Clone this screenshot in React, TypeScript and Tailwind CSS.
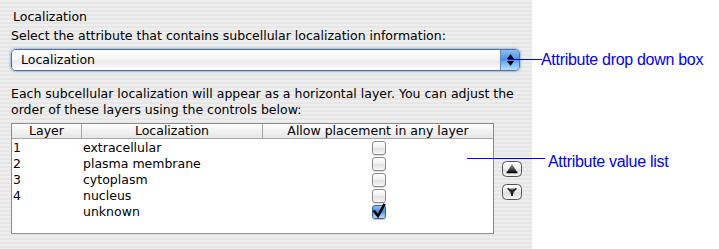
import React from "react";

const rows = [
  { layer: "1", name: "extracellular", checked: false },
  { layer: "2", name: "plasma membrane", checked: false },
  { layer: "3", name: "cytoplasm", checked: false },
  { layer: "4", name: "nucleus", checked: false },
  { layer: "", name: "unknown", checked: true },
];

function Checkbox({ checked }: { checked: boolean }) {
  if (checked) {
    return (
      <div className="relative w-[14px] h-[14px] rounded-[3px] border border-[#3b5f9a] bg-[linear-gradient(#8fc2f7,#3f86e0_50%,#5ea3f3_55%,#b7e0ff)] shadow-[0_1px_1px_rgba(0,0,0,0.25)]">
        <svg width="14" height="15" viewBox="0 0 14 15" className="absolute left-[-1px] top-[-3px]">
          <path d="M2.5 8.5 L6 13 L12 2" fill="none" stroke="#000" strokeWidth="2.6" strokeLinecap="square" strokeLinejoin="miter" />
        </svg>
      </div>
    );
  }
  return (
    <div className="w-[14px] h-[14px] rounded-[3px] border border-[#8a8a8a] bg-[linear-gradient(#ffffff,#eeeeee_50%,#e2e2e2_55%,#f7f7f7)] shadow-[0_1px_1px_rgba(0,0,0,0.15)]" />
  );
}

function UpButton() {
  return (
    <svg width="20" height="16" viewBox="0 0 20 16">
      <defs>
        <linearGradient id="btnbg" x1="0" y1="0" x2="0" y2="1">
          <stop offset="0" stopColor="#ffffff" />
          <stop offset="0.5" stopColor="#eeeeee" />
          <stop offset="0.55" stopColor="#dedede" />
          <stop offset="1" stopColor="#f4f4f4" />
        </linearGradient>
        <linearGradient id="triup" x1="0" y1="0" x2="0" y2="1">
          <stop offset="0" stopColor="#9a9a9a" />
          <stop offset="1" stopColor="#1a1a1a" />
        </linearGradient>
      </defs>
      <rect x="0.5" y="0.5" width="19" height="15" rx="4" fill="url(#btnbg)" stroke="#555" />
      <path d="M10 3 L15 11 L5 11 Z" fill="url(#triup)" />
      <path d="M4.5 11.5 L15.5 11.5" stroke="#000" strokeWidth="1.5" />
    </svg>
  );
}

function DownButton() {
  return (
    <svg width="20" height="16" viewBox="0 0 20 16">
      <defs>
        <linearGradient id="btnbg2" x1="0" y1="0" x2="0" y2="1">
          <stop offset="0" stopColor="#ffffff" />
          <stop offset="0.5" stopColor="#eeeeee" />
          <stop offset="0.55" stopColor="#dedede" />
          <stop offset="1" stopColor="#f4f4f4" />
        </linearGradient>
      </defs>
      <rect x="0.5" y="0.5" width="19" height="15" rx="4" fill="url(#btnbg2)" stroke="#555" />
      <path d="M5.5 4.5 L14.5 4.5 L10 12 Z" fill="#6a6a6a" />
      <path d="M5.5 4.5 L10 7.5 L14.5 4.5" fill="none" stroke="#111" strokeWidth="1.4" />
      <path d="M10 7.5 L10 12" stroke="#111" strokeWidth="1.6" />
    </svg>
  );
}

export default function App() {
  return (
    <div
      className="relative w-[719px] h-[249px] flex bg-white overflow-hidden text-[12.5px] text-black"
      style={{ fontFamily: '"DejaVu Sans", Verdana, sans-serif' }}
    >
      <div className="w-[532px] h-full shrink-0 bg-[repeating-linear-gradient(to_bottom,#eeeeee_0px,#eeeeee_2px,#e6e6e6_2px,#e6e6e6_4px)] pl-[11px] pt-[9px] flex flex-col">
        <div className="h-4 leading-4 ml-[2px]">Localization</div>
        <div className="mt-[3px] h-4 leading-4">Select the attribute that contains subcellular localization information:</div>

        <div className="mt-[5px] w-[509px] h-[22px] flex rounded-[5px] border border-[#54709a] shadow-[0_0_2px_1px_rgba(90,140,210,0.55)] overflow-hidden">
          <div className="flex-1 flex items-center pl-[9px] bg-[linear-gradient(#ffffff,#f5f5f5_50%,#e8e8e8_55%,#ffffff)]">
            Localization
          </div>
          <div className="w-[19px] flex flex-col items-center justify-center gap-[2px] border-l border-[#6a8cc0] bg-[linear-gradient(#8cbdf5,#4a8ee5_50%,#63a6f4_55%,#b6e2ff)]">
            <svg width="7" height="5" viewBox="0 0 7 5"><path d="M3.5 0 L7 5 L0 5 Z" fill="#000" /></svg>
            <svg width="7" height="5" viewBox="0 0 7 5"><path d="M0 0 L7 0 L3.5 5 Z" fill="#000" /></svg>
          </div>
        </div>

        <div className="mt-[15px] leading-4">
          <div>Each subcellular localization will appear as a horizontal layer. You can adjust the</div>
          <div>order of these layers using the controls below:</div>
        </div>

        <div className="mt-[5px] flex">
          <div className="w-[483px] h-[111px] bg-white border border-[#8c8c8c] flex flex-col">
            <div className="h-[15px] flex border-b border-[#a8a8a8] bg-[linear-gradient(#ffffff,#f2f2f2_50%,#e6e6e6)] leading-[14px]">
              <div className="w-[70px] text-center border-r border-[#a8a8a8]">Layer</div>
              <div className="w-[181px] text-center border-r border-[#a8a8a8]">Localization</div>
              <div className="flex-1 text-center">Allow placement in any layer</div>
            </div>
            <div className="pt-[1px]">
              {rows.map((r) => (
                <div key={r.name} className="h-4 flex items-center leading-4">
                  <div className="w-[70px] pl-[1px]">{r.layer}</div>
                  <div className="w-[182px] pl-[1px]">{r.name}</div>
                  <div className="flex-1 flex justify-center">
                    <Checkbox checked={r.checked} />
                  </div>
                </div>
              ))}
            </div>
          </div>
          <div className="ml-[8px] pt-[38px] flex flex-col gap-[7px]">
            <UpButton />
            <DownButton />
          </div>
        </div>
      </div>

      <div className="absolute left-[508px] top-[59px] w-[34px] h-px bg-[#0000ff]" />
      <div
        className="absolute left-[541px] top-[50px] leading-5 text-[16px] tracking-[-0.3px] text-[#0000ff]"
        style={{ fontFamily: '"Liberation Sans", Arial, sans-serif' }}
      >
        Attribute drop down box
      </div>

      <div className="absolute left-[467px] top-[158px] w-[78px] h-px bg-[#0000ff]" />
      <div
        className="absolute left-[548px] top-[152px] leading-5 text-[16px] tracking-[-0.3px] text-[#0000ff]"
        style={{ fontFamily: '"Liberation Sans", Arial, sans-serif' }}
      >
        Attribute value list
      </div>
    </div>
  );
}
